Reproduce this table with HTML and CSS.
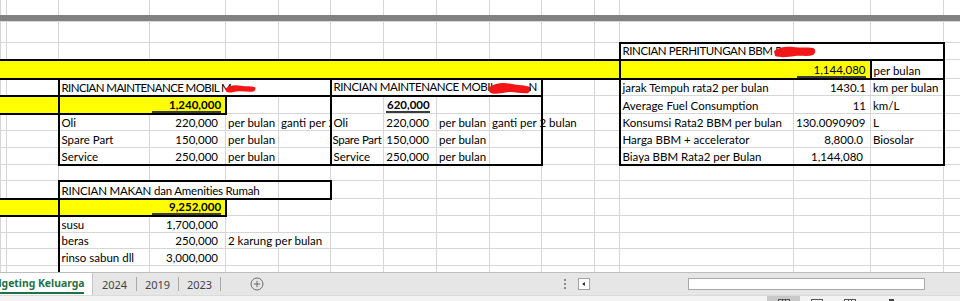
FILE: index.html
```html
<!DOCTYPE html>
<html>
<head>
<meta charset="utf-8">
<title>Budgeting Keluarga</title>
<link rel="stylesheet" href="styles.css">
</head>
<body>
<div class="app">
  <div class="sheet">
    <div class="toprow">
      <table class="grid top">
        <colgroup>
          <col class="w6"><col class="w52"><col class="w91"><col class="w76"><col class="w53"><col class="w52"><col class="w53"><col class="w53"><col class="w53"><col class="w52"><col class="w53"><col class="w25"><col class="w174"><col class="w77"><col class="w73"><col class="w60">
        </colgroup>
        <tr class="h15"><td></td><td></td><td></td><td></td><td></td><td></td><td></td><td></td><td></td><td></td><td></td><td></td><td></td><td></td><td></td><td></td></tr>
      </table>
    </div>
    <div class="splitbar"></div>
    <table class="grid">
      <colgroup>
        <col class="w6"><col class="w52"><col class="w91"><col class="w76"><col class="w53"><col class="w52"><col class="w53"><col class="w53"><col class="w53"><col class="w52"><col class="w53"><col class="w25"><col class="w174"><col class="w77"><col class="w73"><col class="w60">
      </colgroup>
      <tr class="h20"><td></td><td></td><td></td><td></td><td></td><td></td><td></td><td></td><td></td><td></td><td></td><td></td><td></td><td></td><td></td><td></td></tr>
      <tr class="h17">
        <td></td><td></td><td></td><td></td><td></td><td></td><td></td><td></td><td></td><td></td><td></td><td></td>
        <td class="bt bl br hd" colspan="3">RINCIAN PERHITUNGAN BBM P<svg class="redact red-bbm" viewBox="0 0 42 14"><path d="M0 6 C5 2 12 1 19 2 C26 3 33 2 39 3 C42 4 42 8 39 10 C33 12 27 10 21 11 C14 12 7 13 1 11 Z" fill="#f21616"/></svg></td>
        <td></td>
      </tr>
      <tr class="h19">
        <td class="y bt bb" colspan="12"></td>
        <td class="y bt bb bl"></td>
        <td class="y bt bb num"><span class="tot">1,144,080</span></td>
        <td class="bt bb bl br">per bulan</td>
        <td></td>
      </tr>
      <tr class="h17">
        <td></td><td></td>
        <td class="bl br ov hd hd1" colspan="4">RINCIAN MAINTENANCE MOBIL M<svg class="redact red-m1" viewBox="0 0 36 12"><path d="M0 5 C5 1 11 1 18 2 C25 3 31 2 35 4 C36 6 35 8 33 9 C27 10 20 8 13 9 C7 10 3 11 0 9 Z" fill="#f21616"/></svg></td>
        <td class="bl br ov hd" colspan="4">RINCIAN MAINTENANCE MOBIL<svg class="redact red-m2" viewBox="0 0 46 14"><path d="M0 6 C7 1 16 0 24 2 C32 4 40 3 45 6 C46 8 45 11 42 12 C35 13 28 10 20 11 C12 12 6 14 1 11 Z" fill="#f21616"/></svg><span class="tailn">N</span></td>
        <td></td><td></td>
        <td class="bl">jarak Tempuh rata2 per bulan</td>
        <td class="num">1430.1</td>
        <td class="br">km per bulan</td>
        <td></td>
      </tr>
      <tr class="h18">
        <td class="y bt bb" colspan="2"></td>
        <td class="y bt bb bl"></td>
        <td class="y bt bb br num acc b"><span class="tot">1,240,000</span></td>
        <td class="bt"></td>
        <td class="bt br"></td>
        <td class="bt bl"></td>
        <td class="bt num acc b"><span class="tot short">620,000</span></td>
        <td class="bt"></td>
        <td class="bt br"></td>
        <td></td><td></td>
        <td class="bl">Average Fuel Consumption</td>
        <td class="num">11</td>
        <td class="br">km/L</td>
        <td></td>
      </tr>
      <tr class="h17">
        <td></td><td></td>
        <td class="bl">Oli</td>
        <td class="num acc">220,000</td>
        <td>per bulan</td>
        <td class="br">ganti per 2 bulan</td>
        <td class="bl">Oli</td>
        <td class="num acc">220,000</td>
        <td>per bulan</td>
        <td class="br ov">ganti per 2 bulan</td>
        <td></td><td></td>
        <td class="bl">Konsumsi Rata2 BBM per bulan</td>
        <td class="num n6">130.0090909</td>
        <td class="br">L</td>
        <td></td>
      </tr>
      <tr class="h17">
        <td></td><td></td>
        <td class="bl">Spare Part</td>
        <td class="num acc">150,000</td>
        <td>per bulan</td>
        <td class="br"></td>
        <td class="bl tight">Spare Part</td>
        <td class="num acc">150,000</td>
        <td>per bulan</td>
        <td class="br"></td>
        <td></td><td></td>
        <td class="bl">Harga BBM + accelerator</td>
        <td class="num acc">8,800.0</td>
        <td class="br">Biosolar</td>
        <td></td>
      </tr>
      <tr class="h17">
        <td></td><td></td>
        <td class="bl bb">Service</td>
        <td class="num acc bb">250,000</td>
        <td class="bb">per bulan</td>
        <td class="br bb"></td>
        <td class="bl bb">Service</td>
        <td class="num acc bb">250,000</td>
        <td class="bb">per bulan</td>
        <td class="br bb"></td>
        <td></td><td></td>
        <td class="bl bb">Biaya BBM Rata2 per Bulan</td>
        <td class="num acc bb">1,144,080</td>
        <td class="br bb"></td>
        <td></td>
      </tr>
      <tr class="h16"><td></td><td></td><td></td><td></td><td></td><td></td><td></td><td></td><td></td><td></td><td></td><td></td><td></td><td></td><td></td><td></td></tr>
      <tr class="h18">
        <td></td><td></td>
        <td class="bt bl hd2" colspan="3">RINCIAN MAKAN dan Amenities Rumah</td>
        <td class="bt br"></td>
        <td></td><td></td><td></td><td></td><td></td><td></td><td></td><td></td><td></td><td></td>
      </tr>
      <tr class="h17">
        <td class="y bt bb" colspan="2"></td>
        <td class="y bt bb bl"></td>
        <td class="y bt bb br num acc b"><span class="tot">9,252,000</span></td>
        <td class="bt"></td>
        <td class="bt"></td>
        <td></td><td></td><td></td><td></td><td></td><td></td><td></td><td></td><td></td><td></td>
      </tr>
      <tr class="h17">
        <td></td><td></td>
        <td class="bl">susu</td>
        <td class="num acc">1,700,000</td>
        <td></td><td></td>
        <td></td><td></td><td></td><td></td><td></td><td></td><td></td><td></td><td></td><td></td>
      </tr>
      <tr class="h16">
        <td></td><td></td>
        <td class="bl">beras</td>
        <td class="num acc">250,000</td>
        <td colspan="2">2 karung per bulan</td>
        <td></td><td></td><td></td><td></td><td></td><td></td><td></td><td></td><td></td><td></td>
      </tr>
      <tr class="h17">
        <td></td><td></td>
        <td class="bl">rinso sabun dll</td>
        <td class="num acc">3,000,000</td>
        <td></td><td></td>
        <td></td><td></td><td></td><td></td><td></td><td></td><td></td><td></td><td></td><td></td>
      </tr>
      <tr class="h17">
        <td></td><td></td>
        <td class="bl"></td>
        <td></td><td></td><td></td>
        <td></td><td></td><td></td><td></td><td></td><td></td><td></td><td></td><td></td><td></td>
      </tr>
    </table>
  </div>

  <div class="tabbar">
    <div class="tabstrip">
      <div class="tab active"><span class="label">dgeting Keluarga</span></div>
      <div class="tab t44">2024</div>
      <i class="sep"></i>
      <div class="tab t41">2019</div>
      <i class="sep"></i>
      <div class="tab t41">2023</div>
      <i class="sep"></i>
      <div class="add">
        <svg class="plus" viewBox="0 0 14 14"><circle cx="7" cy="7" r="6" fill="none" stroke="#6b6b6b" stroke-width="1"/><path d="M7 3.8V10.2M3.8 7H10.2" stroke="#6b6b6b" stroke-width="1"/></svg>
      </div>
    </div>
    <div class="splitter"><i></i><i></i><i></i></div>
    <div class="hbar">
      <div class="arrowbtn"><svg viewBox="0 0 12 12"><path d="M4 6 L7 3.5 V8.5 Z" fill="#111"/></svg></div>
      <div class="track"><div class="thumb"></div></div>
    </div>
  </div>

  <div class="status">
    <div class="views">
      <div class="view on"><svg viewBox="0 0 14 12"><rect x="1.5" y="3.5" width="11" height="8" fill="none" stroke="#555"/><path d="M5.5 3.5V11M8.5 3.5V11" stroke="#555"/></svg></div>
      <div class="view"><svg viewBox="0 0 14 12"><rect x="1.5" y="3.5" width="11" height="8" fill="none" stroke="#555"/><path d="M1.5 5.5H12.5" stroke="#555"/></svg></div>
      <div class="view"><svg viewBox="0 0 14 12"><rect x="1.5" y="3.5" width="11" height="8" fill="none" stroke="#555"/><path d="M5.5 3.5V11M8.5 3.5V11" stroke="#555"/></svg></div>
    </div>
    <div class="zoommark"></div>
  </div>
</div>
</body>
</html>
```

FILE: styles.css
```css
* { box-sizing: border-box; }
html, body { margin: 0; padding: 0; }
body {
  width: 960px;
  height: 301px;
  overflow: hidden;
  background: #fff;
  font-family: "Lato", "Liberation Sans", sans-serif;
}
.app {
  display: flex;
  flex-direction: column;
  width: 960px;
  height: 301px;
}
.sheet {
  flex: none;
  height: 272px;
  overflow: hidden;
}
.toprow {
  height: 15px;
  overflow: hidden;
}
.splitbar {
  height: 6px;
  width: 960px;
  background: #828282;
}

/* spreadsheet grid */
.grid {
  border-collapse: collapse;
  table-layout: fixed;
  width: 1003px;
  font-size: 11.5px;
  color: #000;
}
.w6 { width: 6px; }
.w25 { width: 25px; }
.w52 { width: 52px; }
.w53 { width: 53px; }
.w60 { width: 60px; }
.w73 { width: 73px; }
.w76 { width: 76px; }
.w77 { width: 77px; }
.w91 { width: 91px; }
.w174 { width: 174px; }

.h15 { height: 16px; }
.h16 { height: 16px; }
.h17 { height: 17px; }
.h18 { height: 18px; }
.h19 { height: 19px; }
.h20 { height: 21px; }

.grid td {
  border: 1px solid #d6d6d6;
  padding: 0 3px 0 2px;
  white-space: nowrap;
  overflow: hidden;
  line-height: 14px;
  vertical-align: bottom;
}
.grid.top td { border-top: none; }
.grid td.y {
  background: #ffff00;
  border-color: #ffff00;
}
.grid td.bt { border-top: 2px solid #000; }
.grid td.bb { border-bottom: 2px solid #000; }
.grid td.bl { border-left: 2px solid #000; }
.grid td.br { border-right: 2px solid #000; }
.grid td.ov { overflow: visible; }
.grid td.hd { letter-spacing: -0.42px; }
.grid td.hd1 { letter-spacing: -0.6px; }
.grid td.hd2 { letter-spacing: -0.2px; }
.grid td.tight { letter-spacing: -0.3px; padding-left: 1px; }
.grid td.num { text-align: right; padding-right: 4px; }
.grid td.acc { padding-right: 7px; }
.grid td.n6 { padding-right: 6px; }
.grid td.b { font-weight: 700; }

.tot {
  display: inline-block;
  padding-left: 17px;
  border-bottom: 2px solid #3c3c3c;
  line-height: 13px;
}
.tot.short { padding-left: 1px; }

.redact {
  display: inline-block;
  vertical-align: middle;
  height: 12px;
}
.red-m1 { width: 36px; height: 10px; margin-left: -8px; }
.red-m2 { width: 46px; height: 13px; margin-left: -9px; }
.red-bbm { width: 42px; height: 14px; margin-left: -8px; }
.tailn { margin-left: -4px; }

/* sheet tabs bar */
.tabbar {
  flex: none;
  height: 23px;
  display: flex;
  align-items: stretch;
  background: #e6e6e6;
  border-top: 1px solid #bdbdbd;
  font-family: "Noto Sans", "Open Sans", sans-serif;
  font-size: 11px;
  color: #444;
}
.tabstrip {
  flex: none;
  width: 560px;
  display: flex;
  align-items: stretch;
}
.tab {
  display: flex;
  align-items: center;
  justify-content: center;
}
.tab.active {
  width: 93px;
  background: #fff;
  border-right: 1px solid #c6c6c6;
  justify-content: flex-start;
  overflow: hidden;
  color: #1f7244;
  font-weight: 700;
  font-size: 10.4px;
}
.tab.active .label {
  display: block;
  margin-left: -5px;
  padding-bottom: 1px;
  border-bottom: 2px solid #1f7244;
  margin-top: 2px;
  line-height: 15px;
}
.t44 { width: 43px; }
.t41 { width: 41px; }
.sep {
  width: 1px;
  height: 14px;
  align-self: center;
  background: #a9a9a9;
}
.add {
  width: 72px;
  display: flex;
  align-items: center;
  justify-content: center;
}
.plus { width: 14px; height: 14px; }
.splitter {
  flex: none;
  width: 10px;
  display: flex;
  flex-direction: column;
  align-items: center;
  justify-content: center;
  gap: 2px;
}
.splitter i {
  width: 2px;
  height: 2px;
  background: #8a8a8a;
}
.hbar {
  flex: 1;
  margin-left: 8px;
  display: flex;
  align-items: center;
}
.arrowbtn {
  flex: none;
  width: 12px;
  height: 12px;
  background: #fff;
  border: 1px solid #a3a3a3;
  display: flex;
}
.arrowbtn svg { width: 10px; height: 10px; }
.track {
  flex: 1;
  height: 12px;
  padding-left: 98px;
  display: flex;
}
.thumb {
  width: 237px;
  height: 12px;
  background: #fff;
  border: 1px solid #a8a8a8;
}

/* status bar */
.status {
  flex: none;
  height: 6px;
  background: #f3f3f3;
  border-top: 1px solid #dadada;
  display: flex;
  overflow: hidden;
}
.views {
  margin-left: 767px;
  display: flex;
}
.view {
  width: 33px;
  display: flex;
  justify-content: center;
}
.view.on { background: #c9c9c9; }
.view svg { width: 14px; height: 12px; flex: none; }
.zoommark {
  margin-left: 23px;
  margin-top: 3px;
  width: 5px;
  height: 2px;
  background: #444;
}
```
